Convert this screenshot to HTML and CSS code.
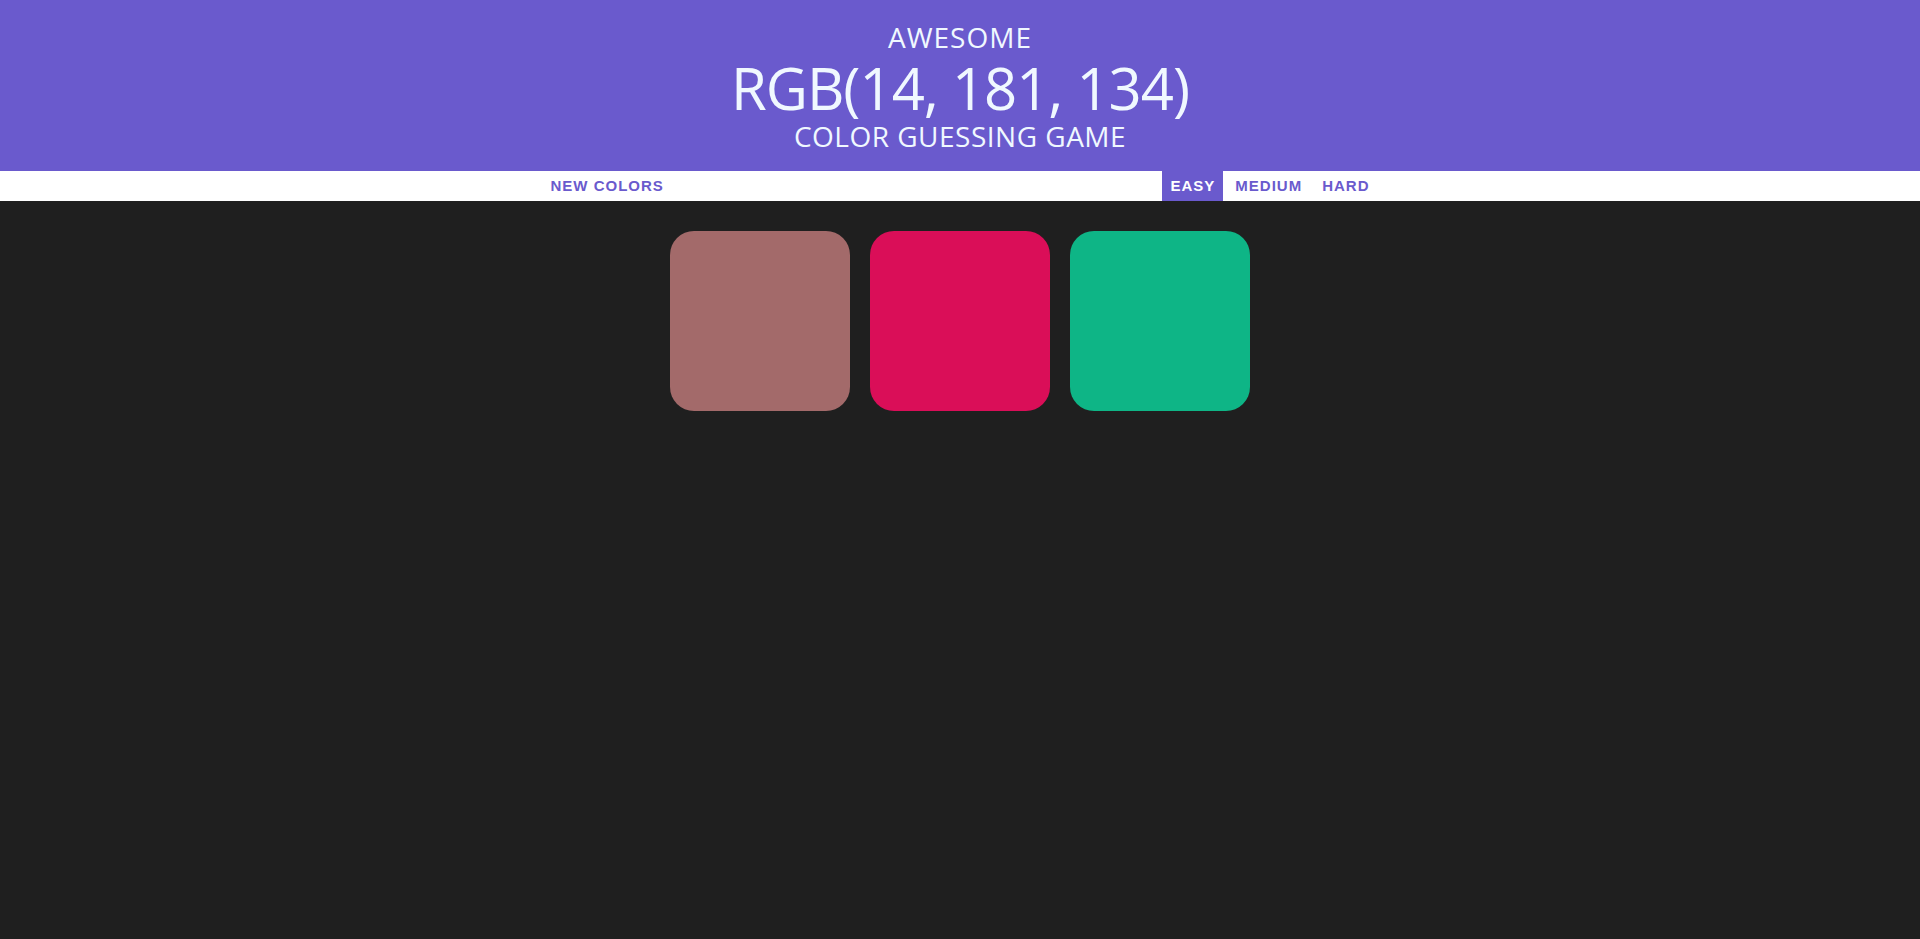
FILE: index.html
```html
<!DOCTYPE html>
<html lang="en">
<head>
<meta charset="utf-8">
<title>Color Guessing Game</title>
<link rel="stylesheet" href="styles.css">
</head>
<body>
  <h1 class="title">
    <span class="title-small title-first">Awesome</span>
    <span class="title-rgb">RGB(14, 181, 134)</span>
    <span class="title-small title-last">Color Guessing Game</span>
  </h1>
  <div class="stripe">
    <div class="stripe-inner">
      <button class="btn">New Colors</button>
      <span class="message"></span>
      <div class="modes">
        <button class="btn selected">Easy</button>
        <button class="btn">Medium</button>
        <button class="btn">Hard</button>
      </div>
    </div>
  </div>
  <div class="container">
    <div class="square sq-1"></div>
    <div class="square sq-2"></div>
    <div class="square sq-3"></div>
  </div>
</body>
</html>
```

FILE: styles.css
```css
html, body {
  margin: 0;
  padding: 0;
}
body {
  background: #1f1f1f;
  height: 939px;
  overflow: hidden;
  font-family: "Open Sans", "Noto Sans", sans-serif;
}
.title {
  margin: 0;
  padding: 20px 0;
  background: #6a5acd;
  color: #f0f8ff;
  text-align: center;
  font-weight: normal;
  text-transform: uppercase;
}
.title span {
  display: block;
}
.title-small {
  font-size: 28px;
  line-height: 34px;
}
.title-first {
  letter-spacing: 1px;
}
.title-last {
  line-height: 30px;
  letter-spacing: 0.5px;
}
.title-rgb {
  font-size: 58px;
  line-height: 67px;
  letter-spacing: -1px;
}
.stripe {
  background: #ffffff;
  height: 30px;
}
.stripe-inner {
  width: 835px;
  height: 30px;
  margin: 0 auto;
  display: flex;
  justify-content: space-between;
}
.modes {
  display: flex;
  gap: 4px;
}
.btn {
  border: none;
  background: #ffffff;
  color: #6a5acd;
  font-family: "Liberation Sans", Arial, sans-serif;
  font-weight: bold;
  font-size: 15px;
  letter-spacing: 1px;
  text-transform: uppercase;
  height: 30px;
  line-height: 30px;
  padding: 0 8px;
  margin: 0;
  cursor: pointer;
}
.btn.selected {
  background: #6a5acd;
  color: #ffffff;
}
.container {
  display: flex;
  justify-content: center;
  gap: 20px;
  margin-top: 30px;
}
.square {
  width: 180px;
  height: 180px;
  border-radius: 24px;
}
.sq-1 { background: #a36a6a; }
.sq-2 { background: #da0e58; }
.sq-3 { background: #0eb586; }
```
